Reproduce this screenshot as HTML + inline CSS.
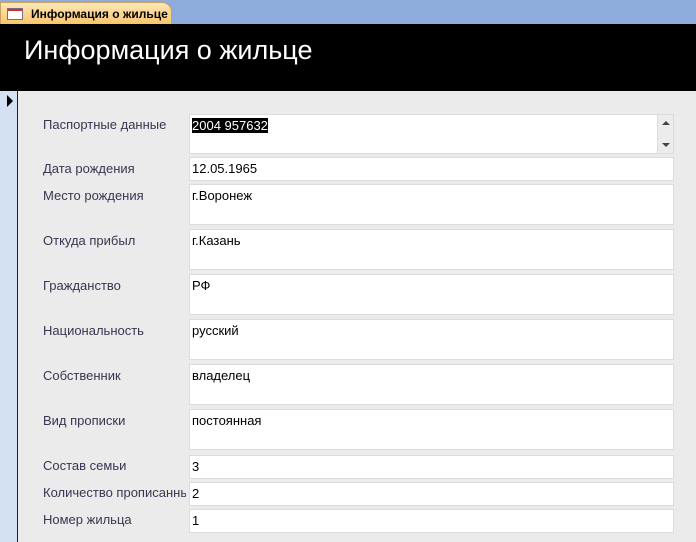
<!DOCTYPE html>
<html><head><meta charset="utf-8"><style>
*{margin:0;padding:0;box-sizing:border-box}
body{width:696px;height:542px;overflow:hidden;position:relative;background:#ebebeb;font-family:"Liberation Sans",sans-serif}
.tabbar{position:absolute;left:0;top:0;width:696px;height:24px;background:#8dabdb}
.tab{position:absolute;left:0;top:2px;width:172px;height:22px;background:linear-gradient(#fde8b8,#f9c56a);border:1px solid #c9a260;border-bottom:none;border-radius:0 10px 0 0;font-weight:bold;font-size:12px;color:#000;padding:4px 0 0 30px}
.ico{position:absolute;left:6px;top:5px;width:16px;height:12px;border:1px solid #7a6a8a;background:#fff}
.ico:before{content:"";position:absolute;left:0;top:0;right:0;height:2px;background:#c33}
.hdr{position:absolute;left:0;top:24px;width:696px;height:67px;background:#000;color:#fff;font-size:27px;padding:11px 0 0 24px}
.strip{position:absolute;left:0;top:91px;width:18px;height:451px;background:#d3e1f2;border-right:1px solid #222}
.arr{position:absolute;left:7px;top:95px;width:0;height:0;border-left:6px solid #000;border-top:6px solid transparent;border-bottom:6px solid transparent}
.l{position:absolute;left:43px;font-size:13px;color:#3a3550;white-space:nowrap;width:143px;overflow:hidden}
.f{position:absolute;left:189px;width:485px;background:#fff;border:1px solid #dcdcdc;font-size:13px;color:#000;padding:3px 0 0 2px}
.sb{position:absolute;left:657px;top:114px;width:17px;height:40px;background:#ececec;border:1px solid #dcdcdc}
</style></head><body>
<div class="tabbar"><div class="tab"><div class="ico"></div>Информация о жильце</div></div>
<div class="hdr">Информация о жильце</div>
<div class="strip"></div><div class="arr"></div>
<div class="l" style="top:117px">Паспортные данные</div>
<div class="f" style="top:114px;height:40px"><span style="background:#000;color:#fff">2004 957632</span></div>
<div class="sb"><div style="position:absolute;left:4px;top:6px;border-bottom:4px solid #444;border-left:4px solid transparent;border-right:4px solid transparent"></div><div style="position:absolute;left:4px;top:28px;border-top:4px solid #444;border-left:4px solid transparent;border-right:4px solid transparent"></div></div>
<div class="l" style="top:161px">Дата рождения</div><div class="f" style="top:157px;height:24px">12.05.1965</div>
<div class="l" style="top:188px">Место рождения</div><div class="f" style="top:184px;height:41px">г.Воронеж</div>
<div class="l" style="top:233px">Откуда прибыл</div><div class="f" style="top:229px;height:41px">г.Казань</div>
<div class="l" style="top:278px">Гражданство</div><div class="f" style="top:274px;height:41px">РФ</div>
<div class="l" style="top:323px">Национальность</div><div class="f" style="top:319px;height:41px">русский</div>
<div class="l" style="top:368px">Собственник</div><div class="f" style="top:364px;height:41px">владелец</div>
<div class="l" style="top:413px">Вид прописки</div><div class="f" style="top:409px;height:41px">постоянная</div>
<div class="l" style="top:458px">Состав семьи</div><div class="f" style="top:455px;height:24px">3</div>
<div class="l" style="top:485px">Количество прописанных</div><div class="f" style="top:482px;height:24px">2</div>
<div class="l" style="top:512px">Номер жильца</div><div class="f" style="top:509px;height:24px">1</div>
</body></html>
